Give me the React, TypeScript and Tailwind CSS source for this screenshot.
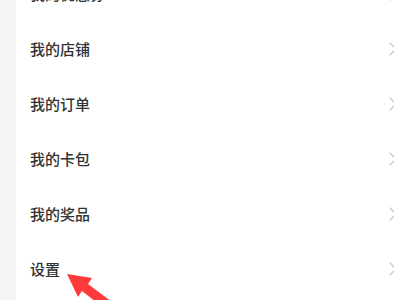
const items = ["我的优惠券", "我的店铺", "我的订单", "我的卡包", "我的奖品", "设置"];

function Chevron() {
  return (
    <svg width="8" height="14" viewBox="0 0 8 14" fill="none" className="shrink-0">
      <path d="M1 1l6 6-6 6" stroke="#c9c9c9" strokeWidth="1.3" strokeLinecap="round" strokeLinejoin="round" />
    </svg>
  );
}

export default function App() {
  return (
    <div
      className="relative h-[300px] w-[394px] overflow-hidden bg-[#f5f5f5]"
      style={{ fontFamily: '"Noto Sans CJK SC", "Noto Sans", sans-serif' }}
    >
      <div className="ml-4 mt-[-34px] h-[340px] w-[380px] bg-white">
        {items.map((label) => (
          <div key={label} className="flex h-[55px] items-center justify-between pl-[14px]">
            <span className="text-[15px] font-medium leading-none text-[#333333]">{label}</span>
            <div className="mr-[-1px]">
              <Chevron />
            </div>
          </div>
        ))}
      </div>
      <svg className="pointer-events-none absolute left-0 top-0" width="394" height="300" viewBox="0 0 394 300">
        <polygon
          points="67,274 92,278 88,284 120,308 114,316 82,291 78,297"
          fill="#ff3a3a"
        />
      </svg>
    </div>
  );
}
